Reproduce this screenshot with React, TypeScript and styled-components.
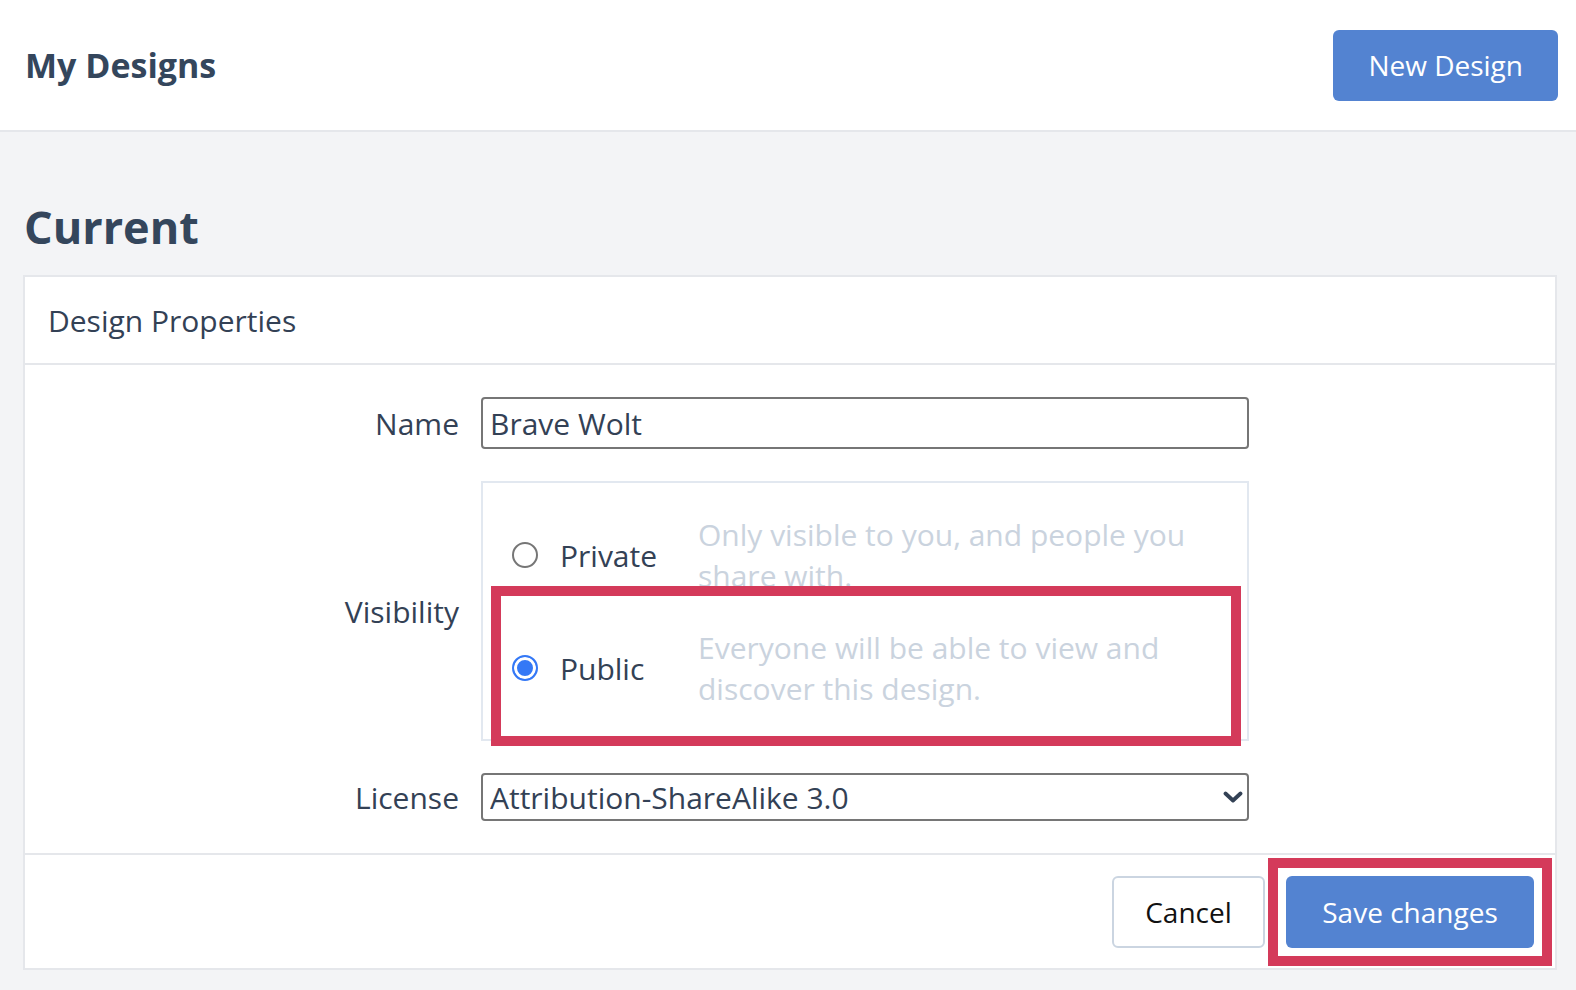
import styled, { createGlobalStyle } from "styled-components";

const GlobalStyle = createGlobalStyle`
  body {
    margin: 0;
    background: #f3f4f6;
    font-family: "Open Sans", "Noto Sans", sans-serif;
    color: #334155;
  }
  * {
    box-sizing: border-box;
  }
`;

const TopBar = styled.header`
  display: flex;
  align-items: center;
  justify-content: space-between;
  height: 132px;
  padding: 0 18px 0 25px;
  background: #ffffff;
  border-bottom: 2px solid #e5e7eb;
`;

const Title = styled.h1`
  margin: 0;
  font-size: 34px;
  font-weight: 700;
  color: #34465c;
`;

const PrimaryButton = styled.button<{ $height?: number; $width?: number }>`
  height: ${(p) => p.$height ?? 72}px;
  width: ${(p) => (p.$width ? `${p.$width}px` : "auto")};
  padding: 0 ${(p) => (p.$width ? 0 : 35)}px;
  border: none;
  border-radius: 6px;
  background: #5383d1;
  color: #ffffff;
  font-family: inherit;
  font-size: 28px;
  cursor: pointer;
`;

const Highlight = styled.div`
  display: flex;
  outline: 10px solid #d43a5a;
  outline-offset: 8px;
`;

const GhostButton = styled.button`
  width: 153px;
  height: 72px;
  border: 2px solid #cbd5e1;
  border-radius: 6px;
  background: #ffffff;
  color: #111111;
  font-family: inherit;
  font-size: 28px;
  cursor: pointer;
`;

const Main = styled.main`
  padding: 67px 19px 0 23px;
`;

const SectionTitle = styled.h2`
  margin: 0 0 20px 1px;
  font-size: 45px;
  line-height: 56px;
  font-weight: 700;
  color: #34465c;
`;

const Card = styled.section`
  background: #ffffff;
  border: 2px solid #e5e7eb;
`;

const CardHeader = styled.div`
  display: flex;
  align-items: center;
  height: 88px;
  padding: 0 23px;
  border-bottom: 2px solid #e5e7eb;
  font-size: 30px;
`;

const FormGrid = styled.div`
  display: grid;
  grid-template-columns: 434px 768px;
  column-gap: 22px;
  row-gap: 32px;
  align-items: center;
  padding: 32px 0;
`;

const Label = styled.label`
  text-align: right;
  font-size: 30px;
  color: #334155;
`;

const TextInput = styled.input`
  width: 100%;
  height: 52px;
  padding: 0 7px;
  border: 2px solid #767676;
  border-radius: 4px;
  font-family: inherit;
  font-size: 30px;
  color: #334155;
  outline: none;
`;

const OptionBox = styled.div`
  display: flex;
  flex-direction: column;
  height: 260px;
  border: 2px solid #e2e8f0;
`;

const Option = styled.label<{ $highlight?: boolean }>`
  display: grid;
  grid-template-columns: 26px 116px 1fr;
  column-gap: 22px;
  align-items: center;
  margin: 0 16px 0 18px;
  padding: 31px 11px ${(p) => (p.$highlight ? 27 : 0)}px;
  outline: ${(p) => (p.$highlight ? "10px solid #d43a5a" : "none")};
  cursor: pointer;
`;

const Radio = styled.input`
  appearance: none;
  width: 26px;
  height: 26px;
  margin: 0;
  border: 2px solid #767676;
  border-radius: 50%;
  background: #ffffff;

  &:checked {
    border-color: #3478f6;
    background: #3478f6;
    box-shadow: inset 0 0 0 3px #ffffff;
  }
`;

const OptionName = styled.span`
  font-size: 30px;
  color: #334155;
`;

const OptionHint = styled.span`
  font-size: 30px;
  line-height: 41px;
  color: #cad3de;
`;

const SelectWrap = styled.div`
  position: relative;
`;

const Select = styled.select`
  width: 100%;
  height: 48px;
  padding: 0 40px 0 7px;
  appearance: none;
  border: 2px solid #767676;
  border-radius: 4px;
  background: #ffffff;
  font-family: inherit;
  font-size: 30px;
  color: #334155;
  outline: none;
`;

const Chevron = styled.svg`
  position: absolute;
  right: 6px;
  top: 18px;
  pointer-events: none;
`;

const CardFooter = styled.div`
  display: flex;
  justify-content: flex-end;
  align-items: center;
  gap: 21px;
  height: 115px;
  padding: 0 21px;
  border-top: 2px solid #e5e7eb;
`;

export default function App() {
  return (
    <>
      <GlobalStyle />
      <TopBar>
        <Title>My Designs</Title>
        <PrimaryButton $height={71}>New Design</PrimaryButton>
      </TopBar>
      <Main>
        <SectionTitle>Current</SectionTitle>
        <Card>
          <CardHeader>Design Properties</CardHeader>
          <FormGrid>
            <Label htmlFor="name">Name</Label>
            <TextInput id="name" defaultValue="Brave Wolt" />

            <Label>Visibility</Label>
            <OptionBox>
              <Option>
                <Radio type="radio" name="visibility" value="private" />
                <OptionName>Private</OptionName>
                <OptionHint>Only visible to you, and people you share with.</OptionHint>
              </Option>
              <Option $highlight>
                <Radio type="radio" name="visibility" value="public" defaultChecked />
                <OptionName>Public</OptionName>
                <OptionHint>Everyone will be able to view and discover this design.</OptionHint>
              </Option>
            </OptionBox>

            <Label htmlFor="license">License</Label>
            <SelectWrap>
              <Select id="license" defaultValue="by-sa-3">
                <option value="by-sa-3">Attribution-ShareAlike 3.0</option>
                <option value="by-3">Attribution 3.0</option>
                <option value="cc0">Public Domain</option>
              </Select>
              <Chevron width="20" height="12" viewBox="0 0 20 12" fill="none">
                <path
                  d="M2.5 2.5 L10 9.5 L17.5 2.5"
                  stroke="#334155"
                  strokeWidth="3.8"
                  strokeLinecap="round"
                  strokeLinejoin="round"
                />
              </Chevron>
            </SelectWrap>
          </FormGrid>
          <CardFooter>
            <GhostButton>Cancel</GhostButton>
            <Highlight>
              <PrimaryButton $width={248}>Save changes</PrimaryButton>
            </Highlight>
          </CardFooter>
        </Card>
      </Main>
    </>
  );
}
